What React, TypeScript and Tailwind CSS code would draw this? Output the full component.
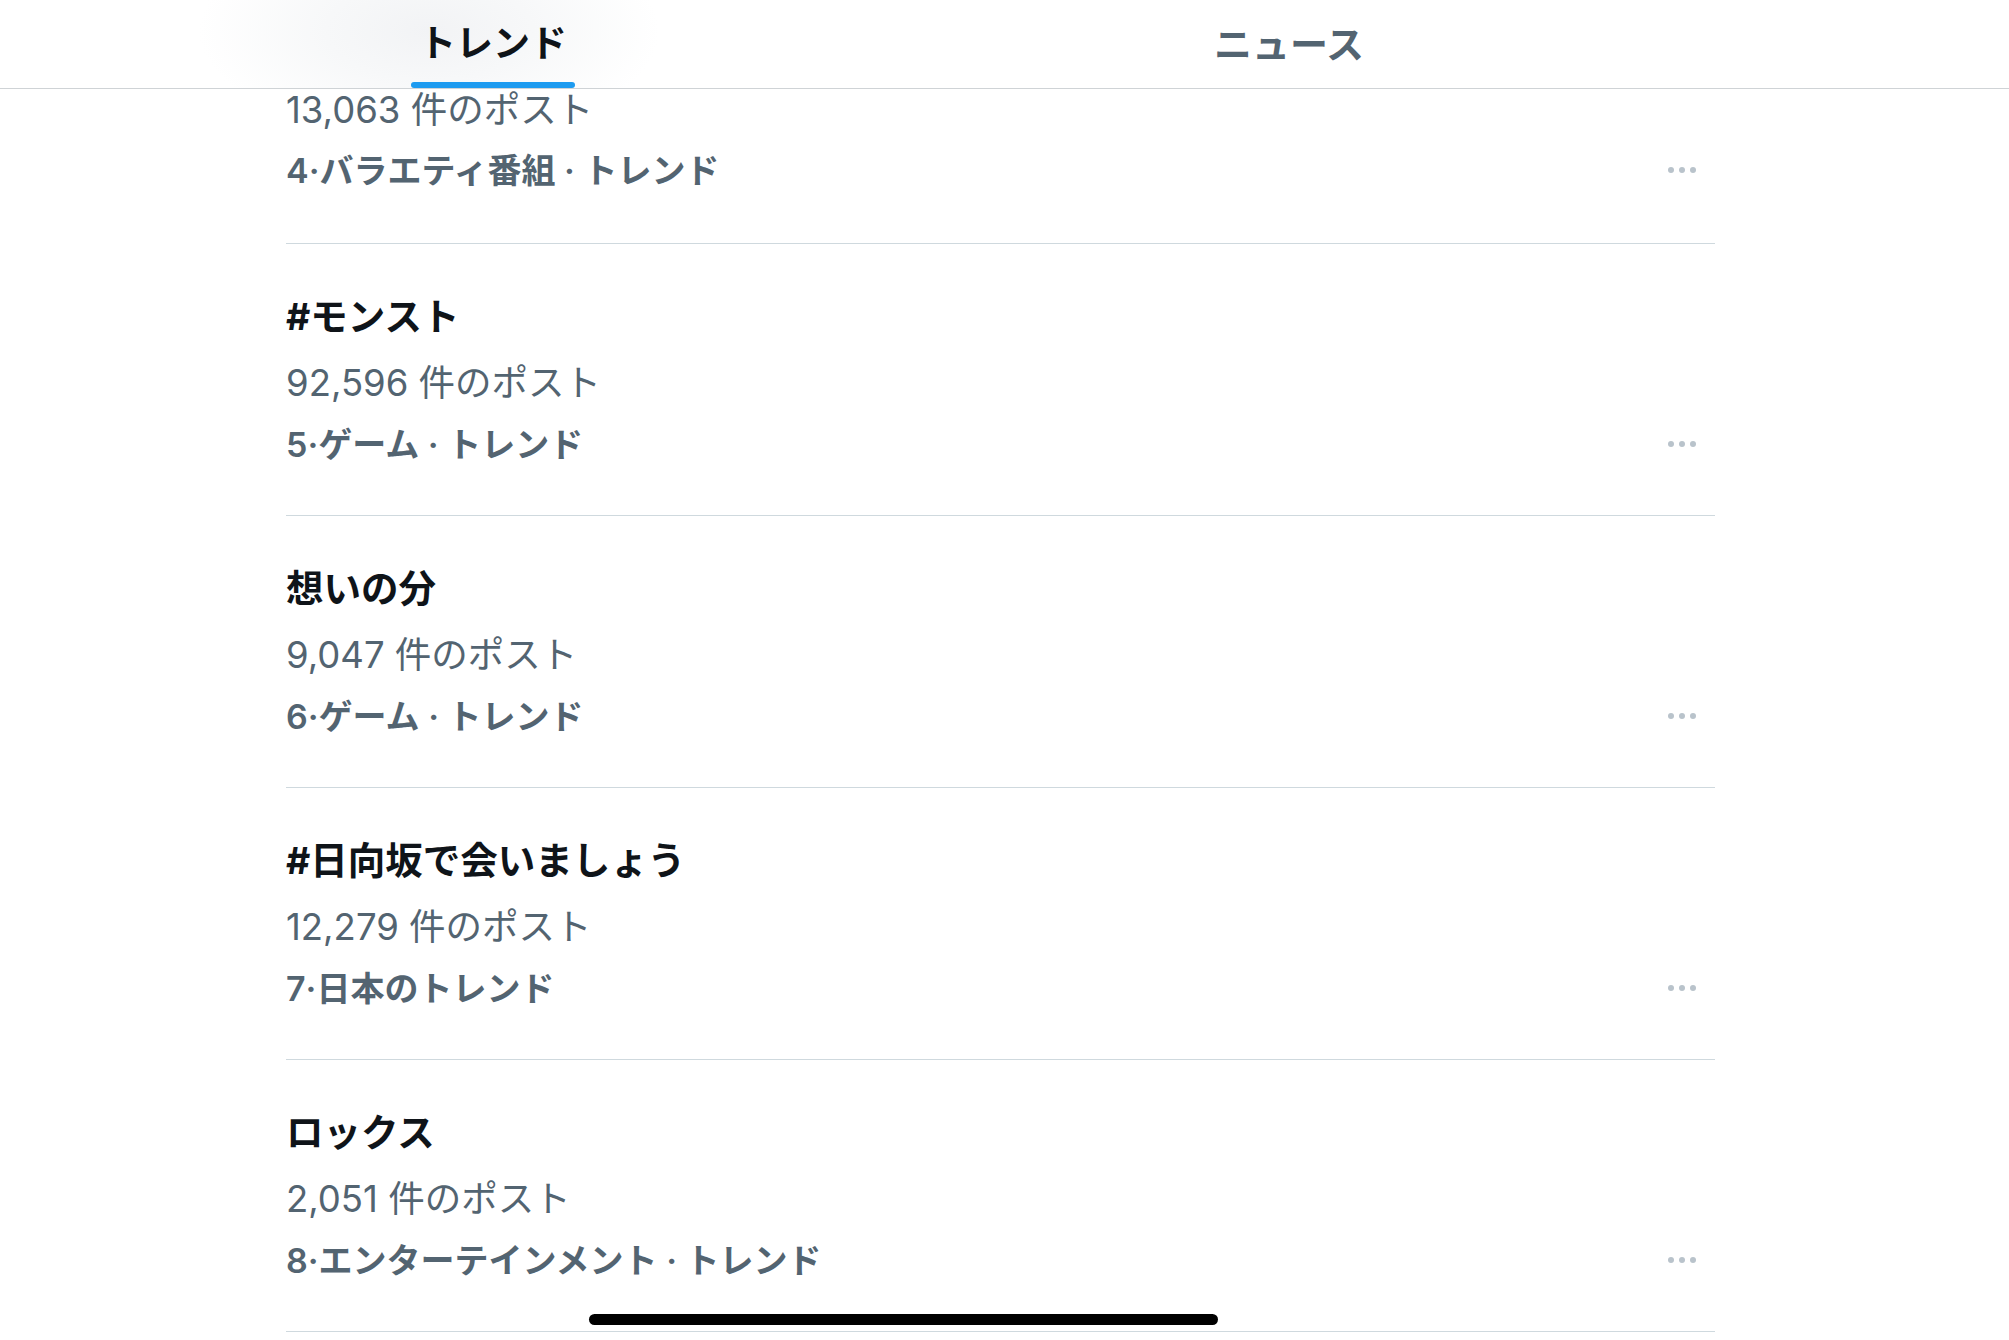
import React from "react";

type Trend = { title?: string; count: string; category: string };

const trends: Trend[] = [
  { count: "13,063 件のポスト", category: "4·バラエティ番組 · トレンド" },
  { title: "#モンスト", count: "92,596 件のポスト", category: "5·ゲーム · トレンド" },
  { title: "想いの分", count: "9,047 件のポスト", category: "6·ゲーム · トレンド" },
  { title: "#日向坂で会いましょう", count: "12,279 件のポスト", category: "7·日本のトレンド" },
  { title: "ロックス", count: "2,051 件のポスト", category: "8·エンターテインメント · トレンド" },
];

function Dots() {
  return (
    <div className="flex items-center gap-[5px] mr-[19px]">
      <span className="block w-[6px] h-[6px] rounded-full bg-[#b9c3cb]" />
      <span className="block w-[6px] h-[6px] rounded-full bg-[#b9c3cb]" />
      <span className="block w-[6px] h-[6px] rounded-full bg-[#b9c3cb]" />
    </div>
  );
}

function Category({ text, lead }: { text: string; lead: string }) {
  return (
    <div className={`flex items-center justify-between ${lead}`}>
      <span className="text-[34px] font-semibold text-[#536471] whitespace-pre">{text}</span>
      <Dots />
    </div>
  );
}

export default function App() {
  const font = { fontFamily: 'Inter, "Noto Sans CJK JP", sans-serif' };
  return (
    <div className="relative w-[2009px] h-[1340px] overflow-hidden bg-white" style={font}>
      <header className="h-[89px] border-b border-[#cfd3d6] flex bg-white">
        <div className="ml-[95px] w-[796px] flex justify-center bg-[radial-gradient(ellipse_230px_110px_at_42%_35%,#f2f3f5_0%,#f7f8f9_45%,#ffffff_100%)]">
          <div className="flex flex-col items-center pt-[22px]">
            <span className="leading-[44px] text-[37px] font-bold text-[#0f1419]">トレンド</span>
            <span className="mt-[16px] block w-[164px] h-[6px] rounded-full bg-[#1d9bf0]" />
          </div>
        </div>
        <div className="w-[796px] flex justify-center">
          <div className="flex flex-col items-center pt-[22px]">
            <span className="leading-[44px] text-[38px] font-bold text-[#536471]">ニュース</span>
          </div>
        </div>
      </header>

      <main className="ml-[286px] w-[1429px]">
        {trends.map((t, i) =>
          i === 0 ? (
            <div key={i} className="border-b border-[#cfd9de] pb-[34px]">
              <div className="leading-[42px] text-[36.5px] text-[#536471]">{t.count}</div>
              <Category text={t.category} lead="h-[78px]" />
            </div>
          ) : (
            <div key={i} className="border-b border-[#cfd9de] pt-[40px] pb-[43px]">
              <div className="leading-[66px] text-[37.5px] font-bold text-[#0f1419]">{t.title}</div>
              <div className="leading-[66px] text-[36.5px] text-[#536471]">{t.count}</div>
              <Category text={t.category} lead="h-[56px]" />
            </div>
          )
        )}
      </main>

      <div className="absolute left-[589px] top-[1314px] w-[629px] h-[11px] rounded-full bg-black" />
    </div>
  );
}
